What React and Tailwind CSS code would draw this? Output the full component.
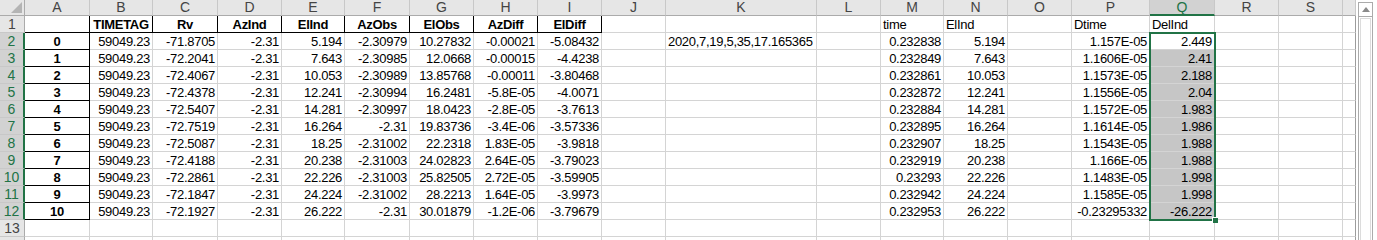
const COLS = ['A', 'B', 'C', 'D', 'E', 'F', 'G', 'H', 'I', 'J', 'K', 'L', 'M', 'N', 'O', 'P', 'Q', 'R', 'S', '']

const HEAD = ['TIMETAG', 'Rv', 'AzInd', 'ElInd', 'AzObs', 'ElObs', 'AzDiff', 'ElDiff']

// B..I, then M, N, P, Q
const DATA = [
  ['59049.23', '-71.8705', '-2.31', '5.194', '-2.30979', '10.27832', '-0.00021', '-5.08432', '0.232838', '5.194', '1.157E-05', '2.449'],
  ['59049.23', '-72.2041', '-2.31', '7.643', '-2.30985', '12.0668', '-0.00015', '-4.4238', '0.232849', '7.643', '1.1606E-05', '2.41'],
  ['59049.23', '-72.4067', '-2.31', '10.053', '-2.30989', '13.85768', '-0.00011', '-3.80468', '0.232861', '10.053', '1.1573E-05', '2.188'],
  ['59049.23', '-72.4378', '-2.31', '12.241', '-2.30994', '16.2481', '-5.8E-05', '-4.0071', '0.232872', '12.241', '1.1556E-05', '2.04'],
  ['59049.23', '-72.5407', '-2.31', '14.281', '-2.30997', '18.0423', '-2.8E-05', '-3.7613', '0.232884', '14.281', '1.1572E-05', '1.983'],
  ['59049.23', '-72.7519', '-2.31', '16.264', '-2.31', '19.83736', '-3.4E-06', '-3.57336', '0.232895', '16.264', '1.1614E-05', '1.986'],
  ['59049.23', '-72.5087', '-2.31', '18.25', '-2.31002', '22.2318', '1.83E-05', '-3.9818', '0.232907', '18.25', '1.1543E-05', '1.988'],
  ['59049.23', '-72.4188', '-2.31', '20.238', '-2.31003', '24.02823', '2.64E-05', '-3.79023', '0.232919', '20.238', '1.166E-05', '1.988'],
  ['59049.23', '-72.2861', '-2.31', '22.226', '-2.31003', '25.82505', '2.72E-05', '-3.59905', '0.23293', '22.226', '1.1483E-05', '1.998'],
  ['59049.23', '-72.1847', '-2.31', '24.224', '-2.31002', '28.2213', '1.64E-05', '-3.9973', '0.232942', '24.224', '1.1585E-05', '1.998'],
  ['59049.23', '-72.1927', '-2.31', '26.222', '-2.31', '30.01879', '-1.2E-06', '-3.79679', '0.232953', '26.222', '-0.23295332', '-26.222'],
]

const RIGHT_COLS = { 12: 8, 13: 9, 15: 10, 16: 11 }
const ROW1_TEXT = { 12: 'time', 13: 'ElInd', 15: 'Dtime', 16: 'DelInd' }

// pandas-style black borders: header B1:I1, index A2:A12
const boxed = (r, c) => (r === 1 && c >= 1 && c <= 8) || (r >= 2 && r <= 12 && c === 0)

function cellContent(r, c) {
  if (r === 1) {
    if (c >= 1 && c <= 8) return { t: HEAD[c - 1], bold: true, align: 'center' }
    if (ROW1_TEXT[c]) return { t: ROW1_TEXT[c], align: 'left' }
    return null
  }
  if (r >= 2 && r <= 12) {
    const row = DATA[r - 2]
    if (c === 0) return { t: String(r - 2), bold: true, align: 'center' }
    if (c >= 1 && c <= 8) return { t: row[c - 1], align: 'right' }
    if (c === 10 && r === 2) return { t: '2020,7,19,5,35,17.165365', align: 'left' }
    if (RIGHT_COLS[c] !== undefined) return { t: row[RIGHT_COLS[c]], align: 'right' }
  }
  return null
}

const ALIGN = { left: 'justify-start', right: 'justify-end', center: 'justify-center' }

function Cell({ r, c }) {
  const v = cellContent(r, c)
  const rightDark = boxed(r, c) || boxed(r, c + 1)
  const bottomDark = boxed(r, c) || boxed(r + 1, c)
  const selected = c === 16 && r >= 3 && r <= 12
  const last = c === 19
  return (
    <div
      className={[
        'border-r border-b flex items-center whitespace-nowrap px-[2px] pt-[1px] text-[13px] tracking-[-0.3px] text-black',
        last ? 'border-r-[#9c9c9c]' : rightDark ? 'border-r-black' : 'border-r-[#d4d4d4]',
        bottomDark ? 'border-b-black' : 'border-b-[#d4d4d4]',
        selected ? 'bg-[#c6c6c6]' : 'bg-white',
        v ? ALIGN[v.align] : '',
        v?.bold ? 'font-bold' : '',
      ].join(' ')}
    >
      {v?.t}
    </div>
  )
}

function RowHead({ r }) {
  const sel = r >= 2 && r <= 12
  return (
    <div
      className={[
        'flex items-center justify-center border-b border-b-[#c8c8c8] text-[14px] pt-[1px]',
        sel ? 'bg-[#d2d2d2] text-[#217346] border-r-2 border-r-[#217346]' : 'bg-[#e6e6e6] text-[#444] border-r border-r-[#ababab]',
      ].join(' ')}
    >
      {r <= 13 ? r : ''}
    </div>
  )
}

function ColHead({ l, i }) {
  const sel = i === 16
  return (
    <div
      className={[
        'flex items-center justify-center text-[14px] border-r border-r-[#c8c8c8]',
        sel ? 'bg-[#d2d2d2] text-[#217346] border-b-2 border-b-[#217346]' : 'bg-[#e6e6e6] text-[#444] border-b border-b-[#ababab]',
      ].join(' ')}
    >
      {l}
    </div>
  )
}

export default function App() {
  const rows = Array.from({ length: 14 }, (_, i) => i + 1)
  return (
    <div className="w-[1377px] h-[240px] overflow-hidden bg-white flex font-['Liberation_Sans',Arial,sans-serif]">
      {/* sheet */}
      <div className="relative">
        <div className="grid grid-cols-[25px_65px_63px_65px_64px_63px_65px_64px_64px_64px_64px_151px_64px_63px_64px_64px_78px_65px_64px_64px_13px] grid-rows-[16px_repeat(13,17px)_8px]">
          {/* corner */}
          <div className="bg-[#e6e6e6] border-r border-b border-[#ababab] flex items-end justify-end pr-[2px] pb-[2px]">
            <svg width="11" height="11" viewBox="0 0 11 11">
              <polygon points="11,0 11,11 0,11" fill="#b4b4b4" />
            </svg>
          </div>
          {COLS.map((l, i) => <ColHead key={i} l={l} i={i} />)}
          {rows.map(r => (
            <div key={r} className="contents">
              <RowHead r={r} />
              {COLS.map((_, c) => <Cell key={c} r={r} c={c} />)}
            </div>
          ))}
        </div>

        {/* selection Q2:Q12 */}
        <div className="absolute left-[1149px] top-[32px] w-[67px] h-[189px] border-2 border-[#217346] pointer-events-none">
          <div className="absolute -right-[4px] -bottom-[4px] w-[6px] h-[6px] bg-[#217346] border-l border-t border-white" />
        </div>
      </div>

      {/* vertical scrollbar */}
      <div className="flex-1 bg-white pl-[2px] pt-[2px] pr-[4px]">
        <div className="h-full w-[15px] border border-[#ababab] border-b-0 flex flex-col bg-white">
          <div className="h-[14px] flex items-center justify-center border-b border-[#ababab]">
            <svg width="8" height="5" viewBox="0 0 8 5">
              <polygon points="4,0 8,5 0,5" fill="#8a8a8a" />
            </svg>
          </div>
          <div className="flex-1 mx-[1px] mt-[1px] border-x border-t border-[#dcdcdc]" />
        </div>
      </div>
    </div>
  )
}
